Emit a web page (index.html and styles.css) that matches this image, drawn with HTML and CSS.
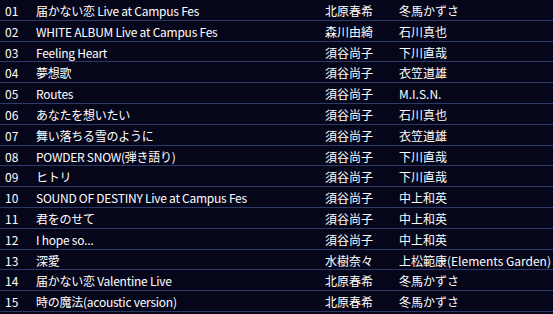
FILE: index.html
```html
<!DOCTYPE html>
<html lang="ja">
<head>
<meta charset="utf-8">
<link rel="stylesheet" href="styles.css">
</head>
<body>
<div class="list">
  <div class="row"><span class="no">01</span><span class="title">届かない恋 Live at Campus Fes</span><span class="artist">北原春希</span><span class="comp">冬馬かずさ</span></div>
  <div class="row"><span class="no">02</span><span class="title">WHITE ALBUM Live at Campus Fes</span><span class="artist">森川由綺</span><span class="comp">石川真也</span></div>
  <div class="row"><span class="no">03</span><span class="title">Feeling Heart</span><span class="artist">須谷尚子</span><span class="comp">下川直哉</span></div>
  <div class="row"><span class="no">04</span><span class="title">夢想歌</span><span class="artist">須谷尚子</span><span class="comp">衣笠道雄</span></div>
  <div class="row"><span class="no">05</span><span class="title">Routes</span><span class="artist">須谷尚子</span><span class="comp">M.I.S.N.</span></div>
  <div class="row"><span class="no">06</span><span class="title">あなたを想いたい</span><span class="artist">須谷尚子</span><span class="comp">石川真也</span></div>
  <div class="row"><span class="no">07</span><span class="title">舞い落ちる雪のように</span><span class="artist">須谷尚子</span><span class="comp">衣笠道雄</span></div>
  <div class="row"><span class="no">08</span><span class="title">POWDER SNOW(弾き語り)</span><span class="artist">須谷尚子</span><span class="comp">下川直哉</span></div>
  <div class="row"><span class="no">09</span><span class="title">ヒトリ</span><span class="artist">須谷尚子</span><span class="comp">下川直哉</span></div>
  <div class="row"><span class="no">10</span><span class="title">SOUND OF DESTINY Live at Campus Fes</span><span class="artist">須谷尚子</span><span class="comp">中上和英</span></div>
  <div class="row"><span class="no">11</span><span class="title">君をのせて</span><span class="artist">須谷尚子</span><span class="comp">中上和英</span></div>
  <div class="row"><span class="no">12</span><span class="title">I hope so<span class="lat">…</span></span><span class="artist">須谷尚子</span><span class="comp">中上和英</span></div>
  <div class="row"><span class="no">13</span><span class="title">深愛</span><span class="artist">水樹奈々</span><span class="comp">上松範康(Elements Garden)</span></div>
  <div class="row"><span class="no">14</span><span class="title">届かない恋 Valentine Live</span><span class="artist">北原春希</span><span class="comp">冬馬かずさ</span></div>
  <div class="row"><span class="no">15</span><span class="title">時の魔法(acoustic version)</span><span class="artist">北原春希</span><span class="comp">冬馬かずさ</span></div>
</div>
</body>
</html>
```
FILE: styles.css
```css
html, body {
  margin: 0;
  padding: 0;
  background: #06061a;
}
body {
  width: 553px;
  height: 314px;
  overflow: hidden;
  color: #ffffff;
  font-family: "Noto Sans CJK JP", "Noto Sans", sans-serif;
  font-size: 12px;
}
.list {
  display: flex;
  flex-direction: column;
}
.row {
  display: grid;
  grid-template-columns: 31px 289px 74px 1fr;
  padding: 3px 0 0 5px;
  height: 16.8px;
  line-height: 16.8px;
  border-bottom: 1px solid #2b3a68;
  white-space: nowrap;
}
.title {
  letter-spacing: -0.25px;
}
.lat {
  font-family: "Noto Sans", sans-serif;
}
```
